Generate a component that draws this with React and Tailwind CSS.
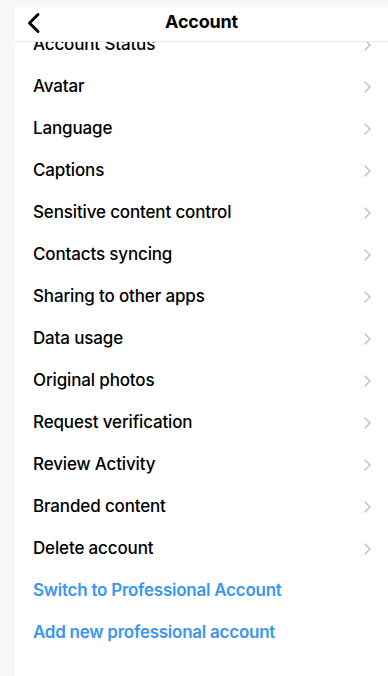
import React from "react";

const items = [
  "Account Status",
  "Avatar",
  "Language",
  "Captions",
  "Sensitive content control",
  "Contacts syncing",
  "Sharing to other apps",
  "Data usage",
  "Original photos",
  "Request verification",
  "Review Activity",
  "Branded content",
  "Delete account",
];

function Chevron() {
  return (
    <svg width="7" height="12" viewBox="0 0 7 12" fill="none">
      <path d="M1 1 L6 6 L1 11" stroke="#b8b8b8" strokeWidth="1.2" strokeLinecap="round" strokeLinejoin="round" />
    </svg>
  );
}

export default function App() {
  return (
    <div
      className="w-[388px] h-[676px] bg-[#f8f8f8] pt-[7px] pl-[15px] overflow-hidden"
      style={{ fontFamily: "Inter, 'Liberation Sans', sans-serif" }}
    >
      <div className="bg-white h-full flex flex-col">
        <div className="relative h-[35px] shrink-0 flex items-center justify-center border-b border-[#ececec] bg-white z-10">
          <svg className="absolute left-[11px] top-[5px]" width="16" height="22" viewBox="0 0 16 22" fill="none">
            <path d="M12 2.5 L3.5 11 L12 19.5" stroke="#000" strokeWidth="3" strokeLinecap="round" strokeLinejoin="round" />
          </svg>
          <span className="text-[18px] font-bold text-black tracking-[-0.2px] mb-[6px]">Account</span>
        </div>
        <div className="flex-1 overflow-hidden">
          <div className="-mt-[18px]">
            {items.map((t) => (
              <div key={t} className="h-[42px] flex items-center justify-between pl-[18px] pr-[17px]">
                <span className="text-[17px] font-medium text-black tracking-[-0.15px]">{t}</span>
                <Chevron />
              </div>
            ))}
            <div className="h-[42px] flex items-center pl-[18px]">
              <span className="text-[17px] font-semibold text-[#3897f0] tracking-[-0.25px]">Switch to Professional Account</span>
            </div>
            <div className="h-[42px] flex items-center pl-[18px]">
              <span className="text-[17px] font-semibold text-[#3897f0] tracking-[-0.25px]">Add new professional account</span>
            </div>
          </div>
        </div>
      </div>
    </div>
  );
}
